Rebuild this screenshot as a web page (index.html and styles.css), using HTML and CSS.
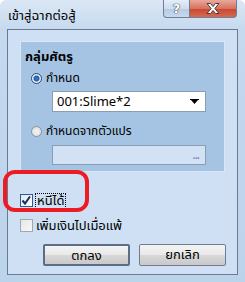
FILE: index.html
```html
<!DOCTYPE html>
<html lang="th">
<head>
    <meta charset="UTF-8">
    <title>เข้าสู่ฉากต่อสู้</title>
    <link rel="stylesheet" href="styles.css">
</head>
<body>
<div class="window">
    <div class="titlebar">
        <span class="title">เข้าสู่ฉากต่อสู้</span>
        <div class="caption-buttons">
            <div class="cap help">?</div>
            <div class="cap close">
                <svg width="16" height="13" viewBox="0 0 16 13">
                    <path d="M2 1.5h3.5l2.5 3 2.5-3H14l-4.2 5 4.2 5h-3.5L8 8.5l-2.5 3H2l4.2-5z" fill="#fff" stroke="#4a3b3b" stroke-width="1"/>
                </svg>
            </div>
        </div>
    </div>

    <div class="client">
        <div class="group">
            <div class="group-label">กลุ่มศัตรู</div>

            <div class="radio-row first">
                <span class="radio on"></span>
                <span>กำหนด</span>
            </div>
            <div class="combo">
                <span>001:Slime*2</span>
                <svg width="9" height="6" viewBox="0 0 9 6"><path d="M0 0h9v1H0zM1 1h7L4.5 5z" fill="#000"/></svg>
            </div>

            <div class="radio-row second">
                <span class="radio"></span>
                <span>กำหนดจากตัวแปร</span>
            </div>
            <div class="textbox disabled">
                <span class="dots">...</span>
            </div>
        </div>

        <div class="check-row first">
            <span class="check on">
                <svg width="11" height="11" viewBox="0 0 11 11"><path d="M1.5 5.5l2.5 3 5-7" fill="none" stroke="#1a2d6b" stroke-width="2"/></svg>
            </span>
            <span class="focus">หนีได้</span>
        </div>
        <div class="check-row second">
            <span class="check"></span>
            <span>เพิ่มเงินไปเมื่อแพ้</span>
        </div>

        <div class="buttons">
            <button class="btn default">ตกลง</button>
            <button class="btn">ยกเลิก</button>
        </div>
    </div>

    <div class="highlight"></div>
</div>
</body>
</html>
```

FILE: styles.css
```css
body {
    margin: 0;
    font-family: "Noto Sans Thai", "Noto Sans", "DejaVu Sans", sans-serif;
    font-size: 12px;
    color: #000;
    background: #fff;
}

.window {
    position: relative;
    width: 245px;
    height: 282px;
    box-sizing: border-box;
    background: linear-gradient(to bottom, #dbe7f4 0, #c5d9ef 30px, #bcd3ec 100%);
    border-radius: 6px 6px 0 0;
    display: flex;
    flex-direction: column;
    overflow: hidden;
}

.titlebar {
    flex: none;
    height: 29px;
    display: flex;
    align-items: flex-start;
}

.title {
    margin: 7px 0 0 8px;
    font-size: 13px;
    line-height: 18px;
}

.caption-buttons {
    margin-left: auto;
    margin-right: 8px;
    display: flex;
}

.cap {
    height: 18px;
    border: 1px solid #6e7f95;
    border-top: none;
    box-sizing: border-box;
    display: flex;
    align-items: center;
    justify-content: center;
}

.help {
    width: 27px;
    border-radius: 0 0 0 4px;
    background: linear-gradient(to bottom, #e5eef8 0, #cddcee 50%, #b6cae2 51%, #c8d9ee 100%);
    font-family: "DejaVu Sans", sans-serif;
    font-weight: bold;
    font-size: 13px;
    color: #fff;
    text-shadow: 0 0 1px #3b4a5e, 0 0 1px #3b4a5e, 0 0 1px #3b4a5e;
}

.close {
    width: 47px;
    border-left: none;
    border-radius: 0 0 4px 0;
    background: linear-gradient(to bottom, #e9a99c 0, #d7725f 50%, #c8462e 51%, #d56a52 100%);
}

.client {
    flex: 1;
    margin: 0 7px 7px;
    border: 1px solid #6a7a8f;
    background: #cfe0f4;
    display: flex;
    flex-direction: column;
}

.client > * {
    flex: none;
}

.group {
    margin: 11px 12px 0;
    height: 131px;
    box-sizing: border-box;
    background: #a5c4e3;
    border: 1px solid #d8e6f5;
    padding: 8px 18px 0 4px;
}

.group-label {
    font-weight: bold;
    font-size: 13px;
    line-height: 14px;
}

.radio-row {
    display: flex;
    align-items: center;
    gap: 4px;
    height: 14px;
    margin-left: 6px;
}

.radio-row.first {
    margin-top: 7px;
}

.radio-row.second {
    margin-top: 12px;
}

.radio {
    width: 11px;
    height: 11px;
    border-radius: 50%;
    border: 1px solid #8a929c;
    background: radial-gradient(circle, #f4f4f4 0, #d5d8dc 100%);
    box-sizing: border-box;
}

.radio.on {
    border-color: #2a4a78;
    background: radial-gradient(circle, #2f82d6 0, #1b5cab 2.5px, #e9eef4 3.5px, #dfe4ea 100%);
}

.combo,
.textbox {
    margin-left: 27px;
    height: 21px;
    box-sizing: border-box;
    border: 1px solid #8b9db3;
    display: flex;
    align-items: center;
    justify-content: space-between;
    padding: 0 6px 0 4px;
}

.combo {
    margin-top: 6px;
    background: #fff;
    font-size: 13px;
}

.textbox {
    margin-top: 7px;
    height: 20px;
    background: #d2e1f4;
}

.dots {
    margin-left: auto;
    color: #8a8bb8;
    font-weight: bold;
    font-size: 11px;
    letter-spacing: -1px;
}

.check-row {
    display: flex;
    align-items: center;
    gap: 3px;
    height: 13px;
    margin-left: 12px;
    font-size: 13px;
}

.check-row.first {
    margin-top: 22px;
}

.check-row.second {
    margin-top: 12px;
}

.check {
    width: 13px;
    height: 13px;
    box-sizing: border-box;
    border: 1px solid #a0a8b2;
    background: linear-gradient(to bottom right, #e4e6e8, #f8f8f8);
    display: flex;
    align-items: center;
    justify-content: center;
}

.check.on {
    border-color: #2d5c8e;
    background: linear-gradient(to bottom right, #dfe8f2, #fff);
}

.focus {
    outline: 1px dotted #000;
    padding: 0 1px;
    line-height: 14px;
}

.buttons {
    margin: 12px 11px 0 0;
    display: flex;
    justify-content: flex-end;
    gap: 9px;
}

.btn {
    width: 87px;
    height: 22px;
    font: inherit;
    font-size: 13px;
    color: #000;
    border: 1px solid #707d8f;
    border-radius: 2px;
    background: linear-gradient(to bottom, #f4f4f4 0, #e8e8e8 50%, #d8d8d8 51%, #c9c9c9 100%);
    padding: 0;
}

.btn.default {
    border: 2px solid #5b6e88;
}

.highlight {
    position: absolute;
    left: 3px;
    top: 170px;
    width: 86px;
    height: 42px;
    box-sizing: border-box;
    border: 4px solid #ec1c24;
    border-radius: 12px;
}
```
